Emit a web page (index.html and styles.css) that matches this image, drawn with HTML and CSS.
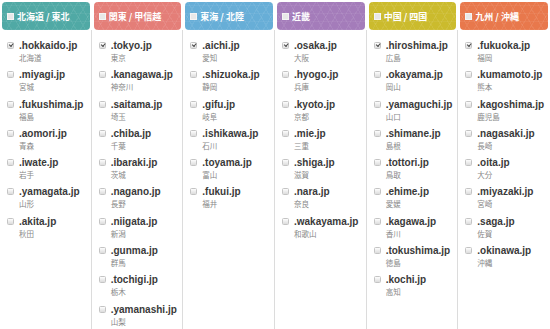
FILE: index.html
```html
<!DOCTYPE html>
<html lang="ja">
<head>
    <meta charset="UTF-8">
    <meta name="viewport" content="width=device-width, initial-scale=1.0">
    <title>都道府県ドメイン</title>
    <link rel="stylesheet" href="styles.css">
</head>
<body>
    <div class="regions">
        <div class="region">
            <div class="region-head teal"><span class="head-box"></span>北海道 / 東北</div>
            <ul class="pref-list">
                <li class="pref"><span class="check on"></span><div class="pref-text"><span class="domain">.hokkaido.jp</span><span class="kanji">北海道</span></div></li>
                <li class="pref"><span class="check"></span><div class="pref-text"><span class="domain">.miyagi.jp</span><span class="kanji">宮城</span></div></li>
                <li class="pref"><span class="check"></span><div class="pref-text"><span class="domain">.fukushima.jp</span><span class="kanji">福島</span></div></li>
                <li class="pref"><span class="check"></span><div class="pref-text"><span class="domain">.aomori.jp</span><span class="kanji">青森</span></div></li>
                <li class="pref"><span class="check"></span><div class="pref-text"><span class="domain">.iwate.jp</span><span class="kanji">岩手</span></div></li>
                <li class="pref"><span class="check"></span><div class="pref-text"><span class="domain">.yamagata.jp</span><span class="kanji">山形</span></div></li>
                <li class="pref"><span class="check"></span><div class="pref-text"><span class="domain">.akita.jp</span><span class="kanji">秋田</span></div></li>
            </ul>
        </div>
        <div class="region">
            <div class="region-head salmon"><span class="head-box"></span>関東 / 甲信越</div>
            <ul class="pref-list">
                <li class="pref"><span class="check on"></span><div class="pref-text"><span class="domain">.tokyo.jp</span><span class="kanji">東京</span></div></li>
                <li class="pref"><span class="check"></span><div class="pref-text"><span class="domain">.kanagawa.jp</span><span class="kanji">神奈川</span></div></li>
                <li class="pref"><span class="check"></span><div class="pref-text"><span class="domain">.saitama.jp</span><span class="kanji">埼玉</span></div></li>
                <li class="pref"><span class="check"></span><div class="pref-text"><span class="domain">.chiba.jp</span><span class="kanji">千葉</span></div></li>
                <li class="pref"><span class="check"></span><div class="pref-text"><span class="domain">.ibaraki.jp</span><span class="kanji">茨城</span></div></li>
                <li class="pref"><span class="check"></span><div class="pref-text"><span class="domain">.nagano.jp</span><span class="kanji">長野</span></div></li>
                <li class="pref"><span class="check"></span><div class="pref-text"><span class="domain">.niigata.jp</span><span class="kanji">新潟</span></div></li>
                <li class="pref"><span class="check"></span><div class="pref-text"><span class="domain">.gunma.jp</span><span class="kanji">群馬</span></div></li>
                <li class="pref"><span class="check"></span><div class="pref-text"><span class="domain">.tochigi.jp</span><span class="kanji">栃木</span></div></li>
                <li class="pref"><span class="check"></span><div class="pref-text"><span class="domain">.yamanashi.jp</span><span class="kanji">山梨</span></div></li>
            </ul>
        </div>
        <div class="region">
            <div class="region-head blue"><span class="head-box"></span>東海 / 北陸</div>
            <ul class="pref-list">
                <li class="pref"><span class="check on"></span><div class="pref-text"><span class="domain">.aichi.jp</span><span class="kanji">愛知</span></div></li>
                <li class="pref"><span class="check"></span><div class="pref-text"><span class="domain">.shizuoka.jp</span><span class="kanji">静岡</span></div></li>
                <li class="pref"><span class="check"></span><div class="pref-text"><span class="domain">.gifu.jp</span><span class="kanji">岐阜</span></div></li>
                <li class="pref"><span class="check"></span><div class="pref-text"><span class="domain">.ishikawa.jp</span><span class="kanji">石川</span></div></li>
                <li class="pref"><span class="check"></span><div class="pref-text"><span class="domain">.toyama.jp</span><span class="kanji">富山</span></div></li>
                <li class="pref"><span class="check"></span><div class="pref-text"><span class="domain">.fukui.jp</span><span class="kanji">福井</span></div></li>
            </ul>
        </div>
        <div class="region">
            <div class="region-head purple"><span class="head-box"></span>近畿</div>
            <ul class="pref-list">
                <li class="pref"><span class="check on"></span><div class="pref-text"><span class="domain">.osaka.jp</span><span class="kanji">大阪</span></div></li>
                <li class="pref"><span class="check"></span><div class="pref-text"><span class="domain">.hyogo.jp</span><span class="kanji">兵庫</span></div></li>
                <li class="pref"><span class="check"></span><div class="pref-text"><span class="domain">.kyoto.jp</span><span class="kanji">京都</span></div></li>
                <li class="pref"><span class="check"></span><div class="pref-text"><span class="domain">.mie.jp</span><span class="kanji">三重</span></div></li>
                <li class="pref"><span class="check"></span><div class="pref-text"><span class="domain">.shiga.jp</span><span class="kanji">滋賀</span></div></li>
                <li class="pref"><span class="check"></span><div class="pref-text"><span class="domain">.nara.jp</span><span class="kanji">奈良</span></div></li>
                <li class="pref"><span class="check"></span><div class="pref-text"><span class="domain">.wakayama.jp</span><span class="kanji">和歌山</span></div></li>
            </ul>
        </div>
        <div class="region">
            <div class="region-head yellow"><span class="head-box"></span>中国 / 四国</div>
            <ul class="pref-list">
                <li class="pref"><span class="check on"></span><div class="pref-text"><span class="domain">.hiroshima.jp</span><span class="kanji">広島</span></div></li>
                <li class="pref"><span class="check"></span><div class="pref-text"><span class="domain">.okayama.jp</span><span class="kanji">岡山</span></div></li>
                <li class="pref"><span class="check"></span><div class="pref-text"><span class="domain">.yamaguchi.jp</span><span class="kanji">山口</span></div></li>
                <li class="pref"><span class="check"></span><div class="pref-text"><span class="domain">.shimane.jp</span><span class="kanji">島根</span></div></li>
                <li class="pref"><span class="check"></span><div class="pref-text"><span class="domain">.tottori.jp</span><span class="kanji">鳥取</span></div></li>
                <li class="pref"><span class="check"></span><div class="pref-text"><span class="domain">.ehime.jp</span><span class="kanji">愛媛</span></div></li>
                <li class="pref"><span class="check"></span><div class="pref-text"><span class="domain">.kagawa.jp</span><span class="kanji">香川</span></div></li>
                <li class="pref"><span class="check"></span><div class="pref-text"><span class="domain">.tokushima.jp</span><span class="kanji">徳島</span></div></li>
                <li class="pref"><span class="check"></span><div class="pref-text"><span class="domain">.kochi.jp</span><span class="kanji">高知</span></div></li>
            </ul>
        </div>
        <div class="region">
            <div class="region-head orange"><span class="head-box"></span>九州 / 沖縄</div>
            <ul class="pref-list last">
                <li class="pref"><span class="check on"></span><div class="pref-text"><span class="domain">.fukuoka.jp</span><span class="kanji">福岡</span></div></li>
                <li class="pref"><span class="check"></span><div class="pref-text"><span class="domain">.kumamoto.jp</span><span class="kanji">熊本</span></div></li>
                <li class="pref"><span class="check"></span><div class="pref-text"><span class="domain">.kagoshima.jp</span><span class="kanji">鹿児島</span></div></li>
                <li class="pref"><span class="check"></span><div class="pref-text"><span class="domain">.nagasaki.jp</span><span class="kanji">長崎</span></div></li>
                <li class="pref"><span class="check"></span><div class="pref-text"><span class="domain">.oita.jp</span><span class="kanji">大分</span></div></li>
                <li class="pref"><span class="check"></span><div class="pref-text"><span class="domain">.miyazaki.jp</span><span class="kanji">宮崎</span></div></li>
                <li class="pref"><span class="check"></span><div class="pref-text"><span class="domain">.saga.jp</span><span class="kanji">佐賀</span></div></li>
                <li class="pref"><span class="check"></span><div class="pref-text"><span class="domain">.okinawa.jp</span><span class="kanji">沖縄</span></div></li>
            </ul>
        </div>
    </div>
</body>
</html>
```

FILE: styles.css
```css
body {
    margin: 0;
    background-color: #fff;
    font-family: "Liberation Sans", Arial, "Noto Sans CJK JP", sans-serif;
    overflow: hidden;
}

.regions {
    display: grid;
    grid-template-columns: repeat(6, 1fr);
    height: 329px;
}

.region {
    display: flex;
    flex-direction: column;
    min-width: 0;
}

/* coloured header with a faint hemp-leaf like texture */
.region-head {
    margin: 2px 2px 0 2px;
    height: 28px;
    border-radius: 4px;
    display: flex;
    align-items: center;
    padding-left: 5px;
    color: #fff;
    font-family: "Noto Sans CJK JP", sans-serif;
    font-size: 9px;
    font-weight: bold;
    white-space: nowrap;
    background-image:
        repeating-linear-gradient(60deg, rgba(255,255,255,0.07) 0 1px, transparent 1px 8px),
        repeating-linear-gradient(-60deg, rgba(255,255,255,0.07) 0 1px, transparent 1px 8px),
        repeating-linear-gradient(0deg, rgba(255,255,255,0.05) 0 1px, transparent 1px 8px);
}

.head-box {
    width: 5px;
    height: 5px;
    background-color: #e8e8e8;
    border: 1px solid #f4f4f4;
    margin-right: 3px;
    flex-shrink: 0;
}

.teal { background-color: #50a9a5; }
.salmon { background-color: #e47e78; }
.blue { background-color: #67aed7; }
.purple { background-color: #a47cba; }
.yellow { background-color: #cbbb2d; }
.orange { background-color: #e8784c; }

.pref-list {
    list-style: none;
    margin: 0;
    padding: 9px 0 0 7px;
    flex: 1;
    border-right: 1px solid #dcdcdc;
}

.pref-list.last {
    border-right: none;
}

.pref {
    display: flex;
    align-items: flex-start;
    height: 29.3px;
}

.check {
    position: relative;
    width: 5px;
    height: 5px;
    margin-top: 3px;
    margin-right: 5px;
    border: 1px solid #c4c4c4;
    border-radius: 1.5px;
    background: linear-gradient(#fdfdfd, #dcdcdc);
    flex-shrink: 0;
}

.check.on::after {
    content: "";
    position: absolute;
    left: 1px;
    top: 0;
    width: 3px;
    height: 1.5px;
    border-left: 1.5px solid #444;
    border-bottom: 1.5px solid #444;
    transform: rotate(-50deg);
}

.pref-text {
    display: flex;
    flex-direction: column;
    white-space: nowrap;
}

.domain {
    font-size: 10px;
    font-weight: bold;
    line-height: 13px;
    color: #3a3a3a;
}

.kanji {
    font-family: "Noto Sans CJK JP", sans-serif;
    font-size: 7.5px;
    line-height: 11px;
    color: #888;
}
```
